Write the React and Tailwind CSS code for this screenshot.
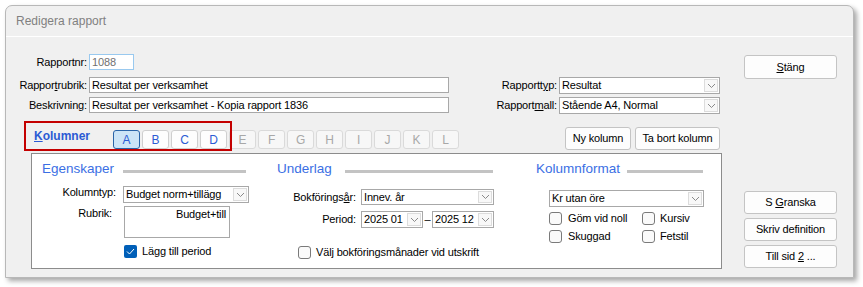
import React from "react";

const Chevron = () => (
  <svg width="9" height="6" viewBox="0 0 9 6" className="block">
    <polyline points="1,1 4.5,4.5 8,1" fill="none" stroke="#8a8a8a" strokeWidth="1" />
  </svg>
);

const Select = ({ value, className = "" }) => (
  <div className={`flex border border-[#a8a8a8] bg-white ${className}`}>
    <span className="flex-1 pl-[2px] leading-[14px] overflow-hidden whitespace-nowrap">{value}</span>
    <div className="w-[14px] m-[1px] border border-[#dcdcdc] bg-[#f8f8f8] flex items-center justify-center">
      <Chevron />
    </div>
  </div>
);

const Input = ({ value, className = "" }) => (
  <div className={`border border-[#a8a8a8] bg-white pl-[2px] leading-[14px] whitespace-nowrap overflow-hidden ${className}`}>
    {value}
  </div>
);

const Checkbox = ({ checked }) =>
  checked ? (
    <div className="w-[13px] h-[13px] rounded-[2px] bg-[#005fb8] flex items-center justify-center">
      <svg width="9" height="7" viewBox="0 0 9 7">
        <polyline points="1,3.5 3.5,6 8,1" fill="none" stroke="#ffffff" strokeWidth="1" />
      </svg>
    </div>
  ) : (
    <div className="w-[13px] h-[13px] rounded-[3px] border border-[#7a7a7a] bg-[#fafafa]" />
  );

const Button = ({ children, className = "" }) => (
  <div className={`flex items-center justify-center rounded-[3px] border border-[#c4c4c4] bg-[#fdfdfd] ${className}`}>
    {children}
  </div>
);

const Heading = ({ text, gap, line }) => (
  <div className="flex h-[16px]">
    <span className="text-[13.5px] leading-[16px] text-[#3b6fe4] tracking-normal">{text}</span>
    <div className={`h-[3px] bg-[#c3c3c3] self-end mb-[4px] ${gap} ${line}`} />
  </div>
);

const tabs = ["A", "B", "C", "D", "E", "F", "G", "H", "I", "J", "K", "L"];

export default function App() {
  return (
    <div
      className="w-[863px] h-[287px] bg-white overflow-hidden text-[11px] text-black tracking-[-0.15px]"
      style={{ fontFamily: '"Liberation Sans", Arial, sans-serif' }}
    >
      <div className="ml-[5px] mt-[5px] w-[849px] border border-[#b8b8b8] rounded-t-[7px] bg-[#f0f0f0] shadow-[3px_3px_5px_rgba(0,0,0,0.35)]">
        {/* title */}
        <div className="h-[31px] flex items-center pl-[10px] border-b border-white">
          <span className="text-[12px] text-[#808080] tracking-normal">Redigera rapport</span>
        </div>

        {/* body */}
        <div className="flex h-[240px]">
          {/* left */}
          <div className="w-[716px] pt-[17px]">
            <div className="flex h-[16px] items-center">
              <span className="w-[83px] pr-[2px] text-right">Rapportnr:</span>
              <div className="w-[45px] h-[16px] border border-[#99c9ef] bg-white pl-[2px] leading-[14px] text-[#707070]">1088</div>
            </div>
            <div className="flex h-[17px] mt-[7px] items-start">
              <span className="w-[83px] pr-[2px] text-right leading-[16px]">
                Rappor<span className="underline">t</span>rubrik:
              </span>
              <Input value="Resultat per verksamhet" className="w-[360px] h-[16px]" />
              <span className="w-[110px] pr-[2px] text-right leading-[16px]">
                Rapportt<span className="underline">y</span>p:
              </span>
              <Select value="Resultat" className="w-[161px] h-[17px]" />
            </div>
            <div className="flex h-[17px] mt-[3px] items-start">
              <span className="w-[83px] pr-[2px] text-right leading-[16px]">Beskrivning:</span>
              <Input value="Resultat per verksamhet - Kopia rapport 1836" className="w-[360px] h-[16px]" />
              <span className="w-[110px] pr-[2px] text-right leading-[16px]">
                Rapport<span className="underline">m</span>all:
              </span>
              <Select value="Stående A4, Normal" className="w-[161px] h-[17px]" />
            </div>

            {/* Kolumner row */}
            <div className="relative flex h-[23px] mt-[13px] pl-[28px] pr-[2px]">
              <div className="absolute left-[18px] top-[-6px] w-[208px] h-[30px] border-2 border-[#c40000]" />
              <div className="w-[79px] pt-[1px]">
                <span className="text-[12px] font-bold text-[#2b5bd4] tracking-normal leading-[14px]">
                  <span className="underline">K</span>olumner
                </span>
              </div>
              <div className="flex gap-[2px] self-end mb-[1px]">
                {tabs.map((t, i) =>
                  i === 0 ? (
                    <div key={t} className="w-[27px] h-[19px] rounded-[3px] border border-[#2a64a8] bg-[#cce4f7] flex items-center justify-center text-[12px] text-[#2b5bd4]">
                      {t}
                    </div>
                  ) : i < 4 ? (
                    <div key={t} className="w-[27px] h-[19px] rounded-[3px] border border-[#cfcfcf] bg-[#fdfdfd] flex items-center justify-center text-[12px] text-[#2b5bd4]">
                      {t}
                    </div>
                  ) : (
                    <div key={t} className="w-[27px] h-[19px] rounded-[3px] border border-[#dadada] bg-[#f7f7f7] flex items-center justify-center text-[12px] text-[#a8a8a8]">
                      {t}
                    </div>
                  )
                )}
              </div>
              <div className="ml-auto flex gap-[4px]">
                <Button className="w-[66px] h-[23px] border-[#9cc0e6]">Ny kolumn</Button>
                <Button className="w-[85px] h-[23px]">Ta bort kolumn</Button>
              </div>
            </div>

            {/* panel */}
            <div className="mt-[3px] ml-[25px] w-[691px] h-[116px] border border-[#8c8c8c] bg-white flex pl-[10px] pt-[7px]">
              {/* Egenskaper */}
              <div className="w-[235px]">
                <Heading text="Egenskaper" gap="ml-[9px]" line="w-[123px]" />
                <div className="flex h-[17px] mt-[9px]">
                  <span className="w-[76px] pr-[2px] text-right leading-[12px]">Kolumntyp:</span>
                  <Select value="Budget norm+tillägg" className="ml-[5px] w-[126px] h-[17px]" />
                </div>
                <div className="flex mt-[3px]">
                  <span className="w-[70px] text-right leading-[14px]">Rubrik:</span>
                  <div className="ml-[12px] w-[106px] h-[32px] border border-[#a8a8a8] bg-white text-right pr-[3px] leading-[14px]">
                    Budget+till
                  </div>
                </div>
                <div className="flex items-center h-[13px] mt-[7px] pl-[82px]">
                  <Checkbox checked />
                  <span className="ml-[5px]">Lägg till period</span>
                </div>
              </div>

              {/* Underlag */}
              <div className="w-[259px]">
                <Heading text="Underlag" gap="ml-[13px]" line="w-[148px]" />
                <div className="flex h-[16px] mt-[12px] items-center">
                  <span className="w-[81px] pr-[2px] text-right">
                    Bokförings<span className="underline">å</span>r:
                  </span>
                  <Select value="Innev. år" className="ml-[3px] w-[133px] h-[16px]" />
                </div>
                <div className="flex h-[17px] mt-[6px] items-center">
                  <span className="w-[81px] pr-[2px] text-right">Period:</span>
                  <Select value="2025 01" className="ml-[3px] w-[62px] h-[17px]" />
                  <span className="w-[9px] text-center">–</span>
                  <Select value="2025 12" className="w-[62px] h-[17px]" />
                </div>
                <div className="flex items-center h-[13px] mt-[18px] pl-[21px]">
                  <Checkbox />
                  <span className="ml-[5px]">Välj bokföringsmånader vid utskrift</span>
                </div>
              </div>

              {/* Kolumnformat */}
              <div className="flex-1">
                <Heading text="Kolumnformat" gap="ml-[7px]" line="w-[76px]" />
                <Select value="Kr utan öre" className="mt-[13px] ml-[13px] w-[155px] h-[17px]" />
                <div className="flex items-center h-[13px] mt-[5px] pl-[13px]">
                  <div className="w-[93px] flex items-center">
                    <Checkbox />
                    <span className="ml-[6px]">Göm vid noll</span>
                  </div>
                  <Checkbox />
                  <span className="ml-[5px]">Kursiv</span>
                </div>
                <div className="flex items-center h-[13px] mt-[5px] pl-[13px]">
                  <div className="w-[93px] flex items-center">
                    <Checkbox />
                    <span className="ml-[6px]">Skuggad</span>
                  </div>
                  <Checkbox />
                  <span className="ml-[5px]">Fetstil</span>
                </div>
              </div>
            </div>
          </div>

          {/* right buttons */}
          <div className="ml-[22px] w-[93px] flex flex-col pt-[18px] pb-[9px]">
            <Button className="h-[24px]">
              <span className="underline">S</span>täng
            </Button>
            <div className="flex-1" />
            <div className="flex flex-col gap-[4px]">
              <Button className="h-[23px]">
                S&nbsp;<span className="underline">G</span>ranska
              </Button>
              <Button className="h-[23px]">Skriv definition</Button>
              <Button className="h-[23px]">
                Till sid&nbsp;<span className="underline">2</span>&nbsp;...
              </Button>
            </div>
          </div>
        </div>
      </div>
    </div>
  );
}
